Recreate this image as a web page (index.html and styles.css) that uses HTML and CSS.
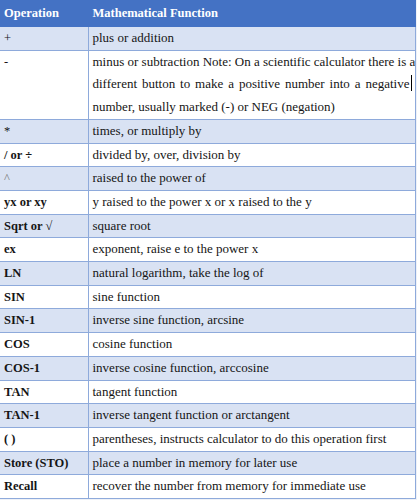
FILE: index.html
```html
<!DOCTYPE html>
<html lang="en">
<head>
<meta charset="utf-8">
<title>Calculator operations</title>
<link rel="stylesheet" href="styles.css">
</head>
<body>
<table class="ops">
  <colgroup><col class="c1"><col class="c2"></colgroup>
  <thead>
    <tr><th>Operation</th><th>Mathematical Function</th></tr>
  </thead>
  <tbody>
    <tr><td class="op thin">+</td><td>plus or addition</td></tr>
    <tr><td class="op thin">-</td><td class="note"><span class="jl">minus or subtraction Note: On a scientific calculator there is a</span><span class="jl">different button to make a positive number into a negative<span class="caret"></span></span><span class="ll">number, usually marked (-) or NEG (negation)</span></td></tr>
    <tr><td class="op thin">*</td><td>times, or multiply by</td></tr>
    <tr><td class="op">/ or ÷</td><td>divided by, over, division by</td></tr>
    <tr><td class="op thin caretop">^</td><td>raised to the power of</td></tr>
    <tr><td class="op">yx or xy</td><td>y raised to the power x or x raised to the y</td></tr>
    <tr><td class="op">Sqrt or √</td><td>square root</td></tr>
    <tr><td class="op">ex</td><td>exponent, raise e to the power x</td></tr>
    <tr><td class="op">LN</td><td>natural logarithm, take the log of</td></tr>
    <tr><td class="op">SIN</td><td>sine function</td></tr>
    <tr><td class="op">SIN-1</td><td>inverse sine function, arcsine</td></tr>
    <tr><td class="op">COS</td><td>cosine function</td></tr>
    <tr><td class="op">COS-1</td><td>inverse cosine function, arccosine</td></tr>
    <tr><td class="op">TAN</td><td>tangent function</td></tr>
    <tr><td class="op">TAN-1</td><td>inverse tangent function or arctangent</td></tr>
    <tr><td class="op">( )</td><td>parentheses, instructs calculator to do this operation first</td></tr>
    <tr><td class="op">Store (STO)</td><td>place a number in memory for later use</td></tr>
    <tr><td class="op">Recall</td><td>recover the number from memory for immediate use</td></tr>
  </tbody>
</table>
</body>
</html>
```

FILE: styles.css
```css
html, body {
  margin: 0;
  padding: 0;
}
body {
  background: #eef1f7;
  width: 417px;
  height: 500px;
  overflow: hidden;
}
.ops {
  border-collapse: collapse;
  table-layout: fixed;
  width: 415px;
  background: #ffffff;
  font-family: "Liberation Serif", "Times New Roman", serif;
  font-size: 13px;
  color: #151515;
}
.c1 { width: 88px; }
.c2 { width: 327px; }
.ops th {
  background: #4472c4;
  color: #ffffff;
  font-weight: bold;
  font-size: 12.5px;
  text-align: left;
  height: 25px;
  padding: 0 4px;
  border: 1px solid #4472c4;
  border-left: none;
  vertical-align: middle;
}
.ops td {
  border: 1px solid #8eaadb;
  padding: 0 3px 0 4px;
  line-height: 22.7px;
  vertical-align: top;
  white-space: nowrap;
  overflow: hidden;
}
.ops td:first-child {
  border-left: none;
}
.ops tbody tr:nth-child(odd) td {
  background: #d9e2f3;
}
.op {
  font-weight: bold;
  font-size: 12.5px;
}
.op.thin {
  font-weight: normal;
}
.caretop {
  color: #777;
}
.note {
  white-space: normal;
}
.jl {
  display: block;
  text-align: justify;
  text-align-last: justify;
}
.ll {
  display: block;
}
.caret {
  display: inline-block;
  width: 0;
  height: 16px;
  border-left: 1px solid #000;
  vertical-align: -3px;
  margin-left: 1px;
}
```
